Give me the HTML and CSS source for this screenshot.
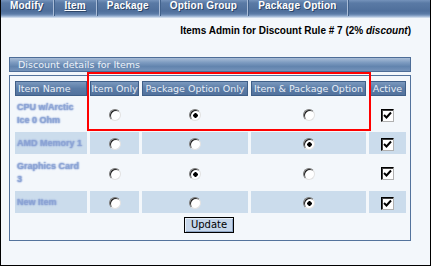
FILE: index.html
```html
<!DOCTYPE html>
<html>
<head>
<meta charset="utf-8">
<link rel="stylesheet" href="styles.css">
</head>
<body>
<nav class="nav">
  <a class="tab">Modify</a>
  <a class="tab current">Item</a>
  <a class="tab">Package</a>
  <a class="tab">Option Group</a>
  <a class="tab">Package Option</a>
</nav>
<h1 class="title">Items Admin for Discount Rule # 7 (2% <i>discount</i>)</h1>
<div class="panel">
  <div class="panel-head">Discount details for Items</div>
  <div class="panel-body">
    <table class="grid">
      <colgroup>
        <col class="c-name"><col class="c-item"><col class="c-pkg"><col class="c-both"><col class="c-active">
      </colgroup>
      <thead>
        <tr>
          <th class="left">Item Name</th>
          <th>Item Only</th>
          <th>Package Option Only</th>
          <th>Item &amp; Package Option</th>
          <th>Active</th>
        </tr>
      </thead>
      <tbody>
        <tr class="tall">
          <td class="name"><span class="blur">CPU w/Arctic Ice 0 Ohm</span></td>
          <td><span class="radio"></span></td>
          <td><span class="radio on"></span></td>
          <td><span class="radio"></span></td>
          <td><span class="check"><svg width="9" height="9" viewBox="0 0 9 9"><path d="M1 4 L3.5 6.5 L8 1.5" fill="none" stroke="#000" stroke-width="2"/></svg></span></td>
        </tr>
        <tr class="shade">
          <td class="name"><span class="blur">AMD Memory 1</span></td>
          <td><span class="radio"></span></td>
          <td><span class="radio"></span></td>
          <td><span class="radio on"></span></td>
          <td><span class="check"><svg width="9" height="9" viewBox="0 0 9 9"><path d="M1 4 L3.5 6.5 L8 1.5" fill="none" stroke="#000" stroke-width="2"/></svg></span></td>
        </tr>
        <tr class="tall tall-b">
          <td class="name"><span class="blur">Graphics Card 3</span></td>
          <td><span class="radio"></span></td>
          <td><span class="radio on"></span></td>
          <td><span class="radio"></span></td>
          <td><span class="check"><svg width="9" height="9" viewBox="0 0 9 9"><path d="M1 4 L3.5 6.5 L8 1.5" fill="none" stroke="#000" stroke-width="2"/></svg></span></td>
        </tr>
        <tr class="shade">
          <td class="name"><span class="blur">New Item</span></td>
          <td><span class="radio"></span></td>
          <td><span class="radio"></span></td>
          <td><span class="radio on"></span></td>
          <td><span class="check"><svg width="9" height="9" viewBox="0 0 9 9"><path d="M1 4 L3.5 6.5 L8 1.5" fill="none" stroke="#000" stroke-width="2"/></svg></span></td>
        </tr>
      </tbody>
    </table>
    <div class="actions"><button class="btn">Update</button></div>
  </div>
</div>
<div class="highlight"></div>
</body>
</html>
```
FILE: styles.css
```css
html, body {
  margin: 0;
  padding: 0;
}
body {
  position: relative;
  width: 431px;
  height: 266px;
  box-sizing: border-box;
  border: 1px solid #000;
  border-top: none;
  background: #f3f7fb;
  font-family: "DejaVu Sans", Verdana, sans-serif;
  overflow: hidden;
}
.nav {
  display: flex;
  height: 18px;
  background: linear-gradient(#7593bb 0, #5a7aa5 3px, #4f6f9b 11px, #5c7ca7 14px, #8ea8cb 16px, #b9cbe2 17px, #dfe8f3 18px);
  margin: 0 -1px;
}
.tab {
  display: block;
  padding: 0 10px;
  height: 16px;
  line-height: 16px;
  font: bold 10px "Liberation Sans", Arial, sans-serif;
  letter-spacing: 0.2px;
  color: #fff;
  text-shadow: 1px 1px 0 #2d4669;
  border-right: 1px solid #a9bcd7;
  box-shadow: 1px 0 0 #41618b;
}
.tab.current {
  text-decoration: underline;
}
.title {
  margin: 7px 19px 0 0;
  text-align: right;
  font: bold 10px/12px "Liberation Sans", Arial, sans-serif;
  color: #000;
}
.title i {
  font-style: italic;
}
.panel {
  margin: 20px 0 0 8px;
  width: 402px;
}
.panel-head {
  height: 13px;
  line-height: 13px;
  padding-left: 8px;
  border: 1px solid #4d6d97;
  background: linear-gradient(#a9bdd7, #7d9bc0 35%, #6284ae 65%, #7593ba);
  color: #edf2f8;
  font-size: 9.5px;
}
.panel-body {
  margin-top: 3px;
  border: 1px solid #54739c;
  height: 162px;
  padding: 2px 2px 0 2px;
}
.grid {
  border-collapse: separate;
  border-spacing: 3px;
  table-layout: fixed;
  width: 397px;
}
.c-name { width: 72px; }
.c-item { width: 49px; }
.c-pkg { width: 106px; }
.c-both { width: 115px; }
.c-active { width: 37px; }
th {
  height: 13px;
  padding: 0;
  border: 1px solid #3f5f88;
  background: linear-gradient(#7b99be, #5b7ca6 50%, #52729d);
  color: #e6edf6;
  font-weight: normal;
  font-size: 9.5px;
  line-height: 13px;
  white-space: nowrap;
  text-align: center;
}
th.left {
  text-align: left;
  padding-left: 2px;
}
td {
  padding: 0;
  text-align: center;
  vertical-align: middle;
}
tr.tall td { height: 30px; }
tr.tall-b td { height: 31px; }
tr.shade td { height: 22px; background: #cbdcec; }
td.name {
  text-align: left;
  padding: 0 3px 0 2px;
  font: bold 9px/13px "Liberation Sans", Arial, sans-serif;
}
.blur {
  display: block;
  color: transparent;
  text-shadow: 0 0 1.2px #8aa2d4, 0 0 1.2px #8aa2d4, 0 0 2px #a8bbe0;
}
.radio {
  display: inline-block;
  vertical-align: middle;
  width: 10px;
  height: 10px;
  border-radius: 50%;
  background: #fff;
  border: 1px solid;
  border-color: #7a7a7a #e2e2e2 #e2e2e2 #7a7a7a;
  box-shadow: inset 1px 1px 0 #1e1e1e;
}
.radio.on {
  background: radial-gradient(circle at 55% 55%, #000 0 2px, #fff 2.5px);
}
.check {
  display: inline-flex;
  align-items: center;
  justify-content: center;
  vertical-align: middle;
  width: 11px;
  height: 11px;
  background: #fff;
  border: 1px solid;
  border-color: #000 #b0b0b0 #b0b0b0 #000;
  box-shadow: inset 1px 1px 0 #404040;
}
.actions {
  display: flex;
  justify-content: center;
  padding-top: 1px;
  padding-right: 2px;
}
.btn {
  width: 50px;
  height: 16px;
  padding: 0;
  border: 1px solid #000;
  background: #c6d6ea;
  box-shadow: inset 1px 1px 0 #e8f0f8, inset -1px -1px 0 #8ea6c6;
  font: 10px/14px "DejaVu Sans", Verdana, sans-serif;
  color: #000;
}
.highlight {
  position: absolute;
  left: 86px;
  top: 72px;
  width: 280px;
  height: 55px;
  border: 2px solid #ff0000;
}
```
